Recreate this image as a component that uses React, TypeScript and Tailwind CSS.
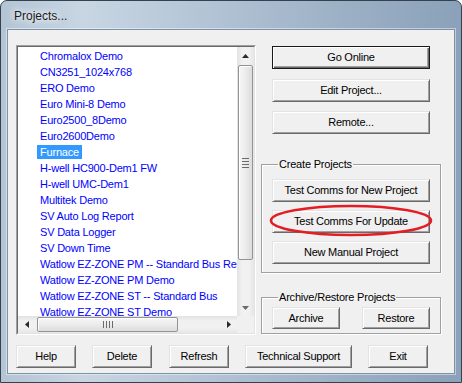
import React from 'react';

const projects = [
  'Chromalox Demo',
  'CN3251_1024x768',
  'ERO Demo',
  'Euro Mini-8 Demo',
  'Euro2500_8Demo',
  'Euro2600Demo',
  'Furnace',
  'H-well HC900-Dem1 FW',
  'H-well UMC-Dem1',
  'Multitek Demo',
  'SV Auto Log Report',
  'SV Data Logger',
  'SV Down Time',
  'Watlow EZ-ZONE PM -- Standard Bus Re',
  'Watlow EZ-ZONE PM Demo',
  'Watlow EZ-ZONE ST -- Standard Bus',
  'Watlow EZ-ZONE ST Demo',
];

const font = { fontFamily: '"Liberation Sans", Arial, sans-serif' };

function Btn({
  children,
  primary,
  className = '',
}: {
  children: React.ReactNode;
  primary?: boolean;
  className?: string;
}) {
  const edge = primary
    ? 'border border-[#1a1a1a] shadow-[inset_1px_1px_0_#fff,inset_-1px_-1px_0_#696969,inset_-2px_-2px_0_#a0a0a0]'
    : 'border border-t-[#e3e3e3] border-l-[#e3e3e3] border-r-[#696969] border-b-[#696969] shadow-[inset_1px_1px_0_#fff,inset_-1px_-1px_0_#a0a0a0]';
  return (
    <button
      className={`flex items-center justify-center bg-[#f0f0f0] text-[11px] tracking-[-0.25px] text-black ${edge} ${className}`}
    >
      {children}
    </button>
  );
}

function Group({ title, children, className = '' }: { title: string; children: React.ReactNode; className?: string }) {
  return (
    <fieldset
      className={`border border-[#a0a0a0] shadow-[inset_1px_1px_0_#fff,1px_1px_0_#fff] pl-[10px] ${className}`}
    >
      <legend className="ml-[6px] px-[1px] text-[11px] leading-[13px] tracking-[-0.2px] text-black">{title}</legend>
      {children}
    </fieldset>
  );
}

function Arrow({ dir }: { dir: 'up' | 'down' | 'left' | 'right' }) {
  const pts = {
    up: '0,4 3.5,0 7,4',
    down: '0,0 7,0 3.5,4',
    left: '4,0 4,7 0,3.5',
    right: '0,0 4,3.5 0,7',
  }[dir];
  const vertical = dir === 'up' || dir === 'down';
  return (
    <svg width={vertical ? 7 : 4} height={vertical ? 4 : 7} viewBox={vertical ? '0 0 7 4' : '0 0 4 7'}>
      <polygon points={pts} fill={dir === 'down' ? '#6a6a6a' : '#2a2a2a'} />
    </svg>
  );
}

export default function App() {
  return (
    <div className="w-[462px] h-[383px] overflow-hidden bg-white" style={font}>
      <div className="flex flex-col w-[462px] h-[383px] rounded-t-[7px] border border-[#34414f] bg-[linear-gradient(90deg,#b3c4d5_0%,#c8d6e3_18%,#b2c4d5_45%,#9cb0c5_75%,#8aa1b9_100%)] px-[6px] pb-[8px]">
        <div className="h-[28px] pl-[7px] pt-[6px] text-[12px] text-[#1b1b1b] [text-shadow:0_0_6px_#fff,0_0_10px_#fff]">
          Projects...
        </div>

        <div className="flex flex-col h-[345px] border border-[#7f91a4] bg-[#f0f0f0] pl-[8px] pt-[15px] shadow-[0_0_0_1px_rgba(255,255,255,0.45)]">
          <div className="flex">
            <div className="w-[240px] h-[290px] border border-t-[#a0a0a0] border-l-[#a0a0a0] border-b-white border-r-white">
              <div className="h-full border border-t-[#696969] border-l-[#696969] border-b-[#e3e3e3] border-r-[#e3e3e3] bg-white grid grid-cols-[1fr_17px] grid-rows-[1fr_17px]">
                <div className="overflow-hidden whitespace-nowrap text-[11px] tracking-[-0.2px]">
                  {projects.map((p) => (
                    <div key={p} className="h-[16px] pt-[1px] pl-[19px]">
                      <span
                        className={`inline-block px-[3px] leading-[14px] ${
                          p === 'Furnace' ? 'bg-[#3399ff] text-white' : 'text-[#0000ff]'
                        }`}
                      >
                        {p}
                      </span>
                    </div>
                  ))}
                </div>

                <div className="flex flex-col bg-[linear-gradient(90deg,#e2e2e2,#f1f1f1_30%,#f1f1f1_70%,#e6e6e6)]">
                  <div className="h-[17px] flex items-center justify-center">
                    <Arrow dir="up" />
                  </div>
                  <div className="flex-1">
                    <div className="mx-px mt-px h-[195px] rounded-[2px] border border-[#939393] bg-[linear-gradient(90deg,#f6f6f6,#ececec_50%,#dcdcdc)] flex flex-col items-center justify-center gap-[2px] shadow-[inset_1px_1px_0_#fff]">
                      <div className="w-[7px] h-px bg-[#6a6a6a]" />
                      <div className="w-[7px] h-px bg-[#6a6a6a]" />
                      <div className="w-[7px] h-px bg-[#6a6a6a]" />
                      <div className="w-[7px] h-px bg-[#6a6a6a]" />
                    </div>
                  </div>
                  <div className="h-[17px] flex items-center justify-center">
                    <Arrow dir="down" />
                  </div>
                </div>

                <div className="flex bg-[linear-gradient(180deg,#e2e2e2,#f1f1f1_30%,#f1f1f1_70%,#e6e6e6)]">
                  <div className="w-[17px] flex items-center justify-center">
                    <Arrow dir="left" />
                  </div>
                  <div className="flex-1">
                    <div className="ml-[2px] my-px h-[15px] w-[141px] rounded-[2px] border border-[#939393] bg-[linear-gradient(180deg,#f6f6f6,#ececec_50%,#dcdcdc)] flex items-center justify-center gap-[2px] shadow-[inset_1px_1px_0_#fff]">
                      <div className="h-[7px] w-px bg-[#6a6a6a]" />
                      <div className="h-[7px] w-px bg-[#6a6a6a]" />
                      <div className="h-[7px] w-px bg-[#6a6a6a]" />
                      <div className="h-[7px] w-px bg-[#6a6a6a]" />
                    </div>
                  </div>
                  <div className="w-[17px] flex items-center justify-center">
                    <Arrow dir="right" />
                  </div>
                </div>

                <div className="bg-[#f0f0f0]" />
              </div>
            </div>

            <div className="ml-[5px] w-[180px] flex flex-col">
              <div className="pl-[11px] flex flex-col">
                <Btn primary className="mt-px w-[158px] h-[23px]">Go Online</Btn>
                <Btn className="mt-[10px] w-[158px] h-[23px]">Edit Project...</Btn>
                <Btn className="mt-[9px] w-[158px] h-[23px]">Remote...</Btn>
              </div>

              <Group title="Create Projects" className="mt-[24px] pt-[8px] pb-[8px]">
                <div className="flex flex-col gap-[8px]">
                  <Btn className="w-[158px] h-[23px]">Test Comms for New Project</Btn>
                  <div className="relative w-[158px] h-[23px]">
                    <Btn className="w-[158px] h-[23px]">Test Comms For Update</Btn>
                    <svg
                      className="absolute left-[-3px] top-[-6px] pointer-events-none"
                      width="164"
                      height="33"
                      viewBox="0 0 164 33"
                    >
                      <ellipse cx="82" cy="16.5" rx="80" ry="14.5" fill="none" stroke="#e41c24" strokeWidth="2.6" />
                    </svg>
                  </div>
                  <Btn className="w-[158px] h-[23px]">New Manual Project</Btn>
                </div>
              </Group>

              <Group title="Archive/Restore Projects" className="mt-[18px] pt-[3px] pb-[4px]">
                <div className="flex gap-[22px]">
                  <Btn className="w-[68px] h-[22px]">Archive</Btn>
                  <Btn className="w-[68px] h-[22px]">Restore</Btn>
                </div>
              </Group>
            </div>
          </div>

          <div className="mt-[10px] flex">
            <Btn className="w-[60px] h-[23px]">Help</Btn>
            <Btn className="ml-[16px] w-[60px] h-[23px]">Delete</Btn>
            <Btn className="ml-[17px] w-[60px] h-[23px]">Refresh</Btn>
            <Btn className="ml-[16px] w-[107px] h-[23px]">Technical Support</Btn>
            <Btn className="ml-[16px] w-[60px] h-[23px]">Exit</Btn>
          </div>
        </div>
      </div>
    </div>
  );
}
